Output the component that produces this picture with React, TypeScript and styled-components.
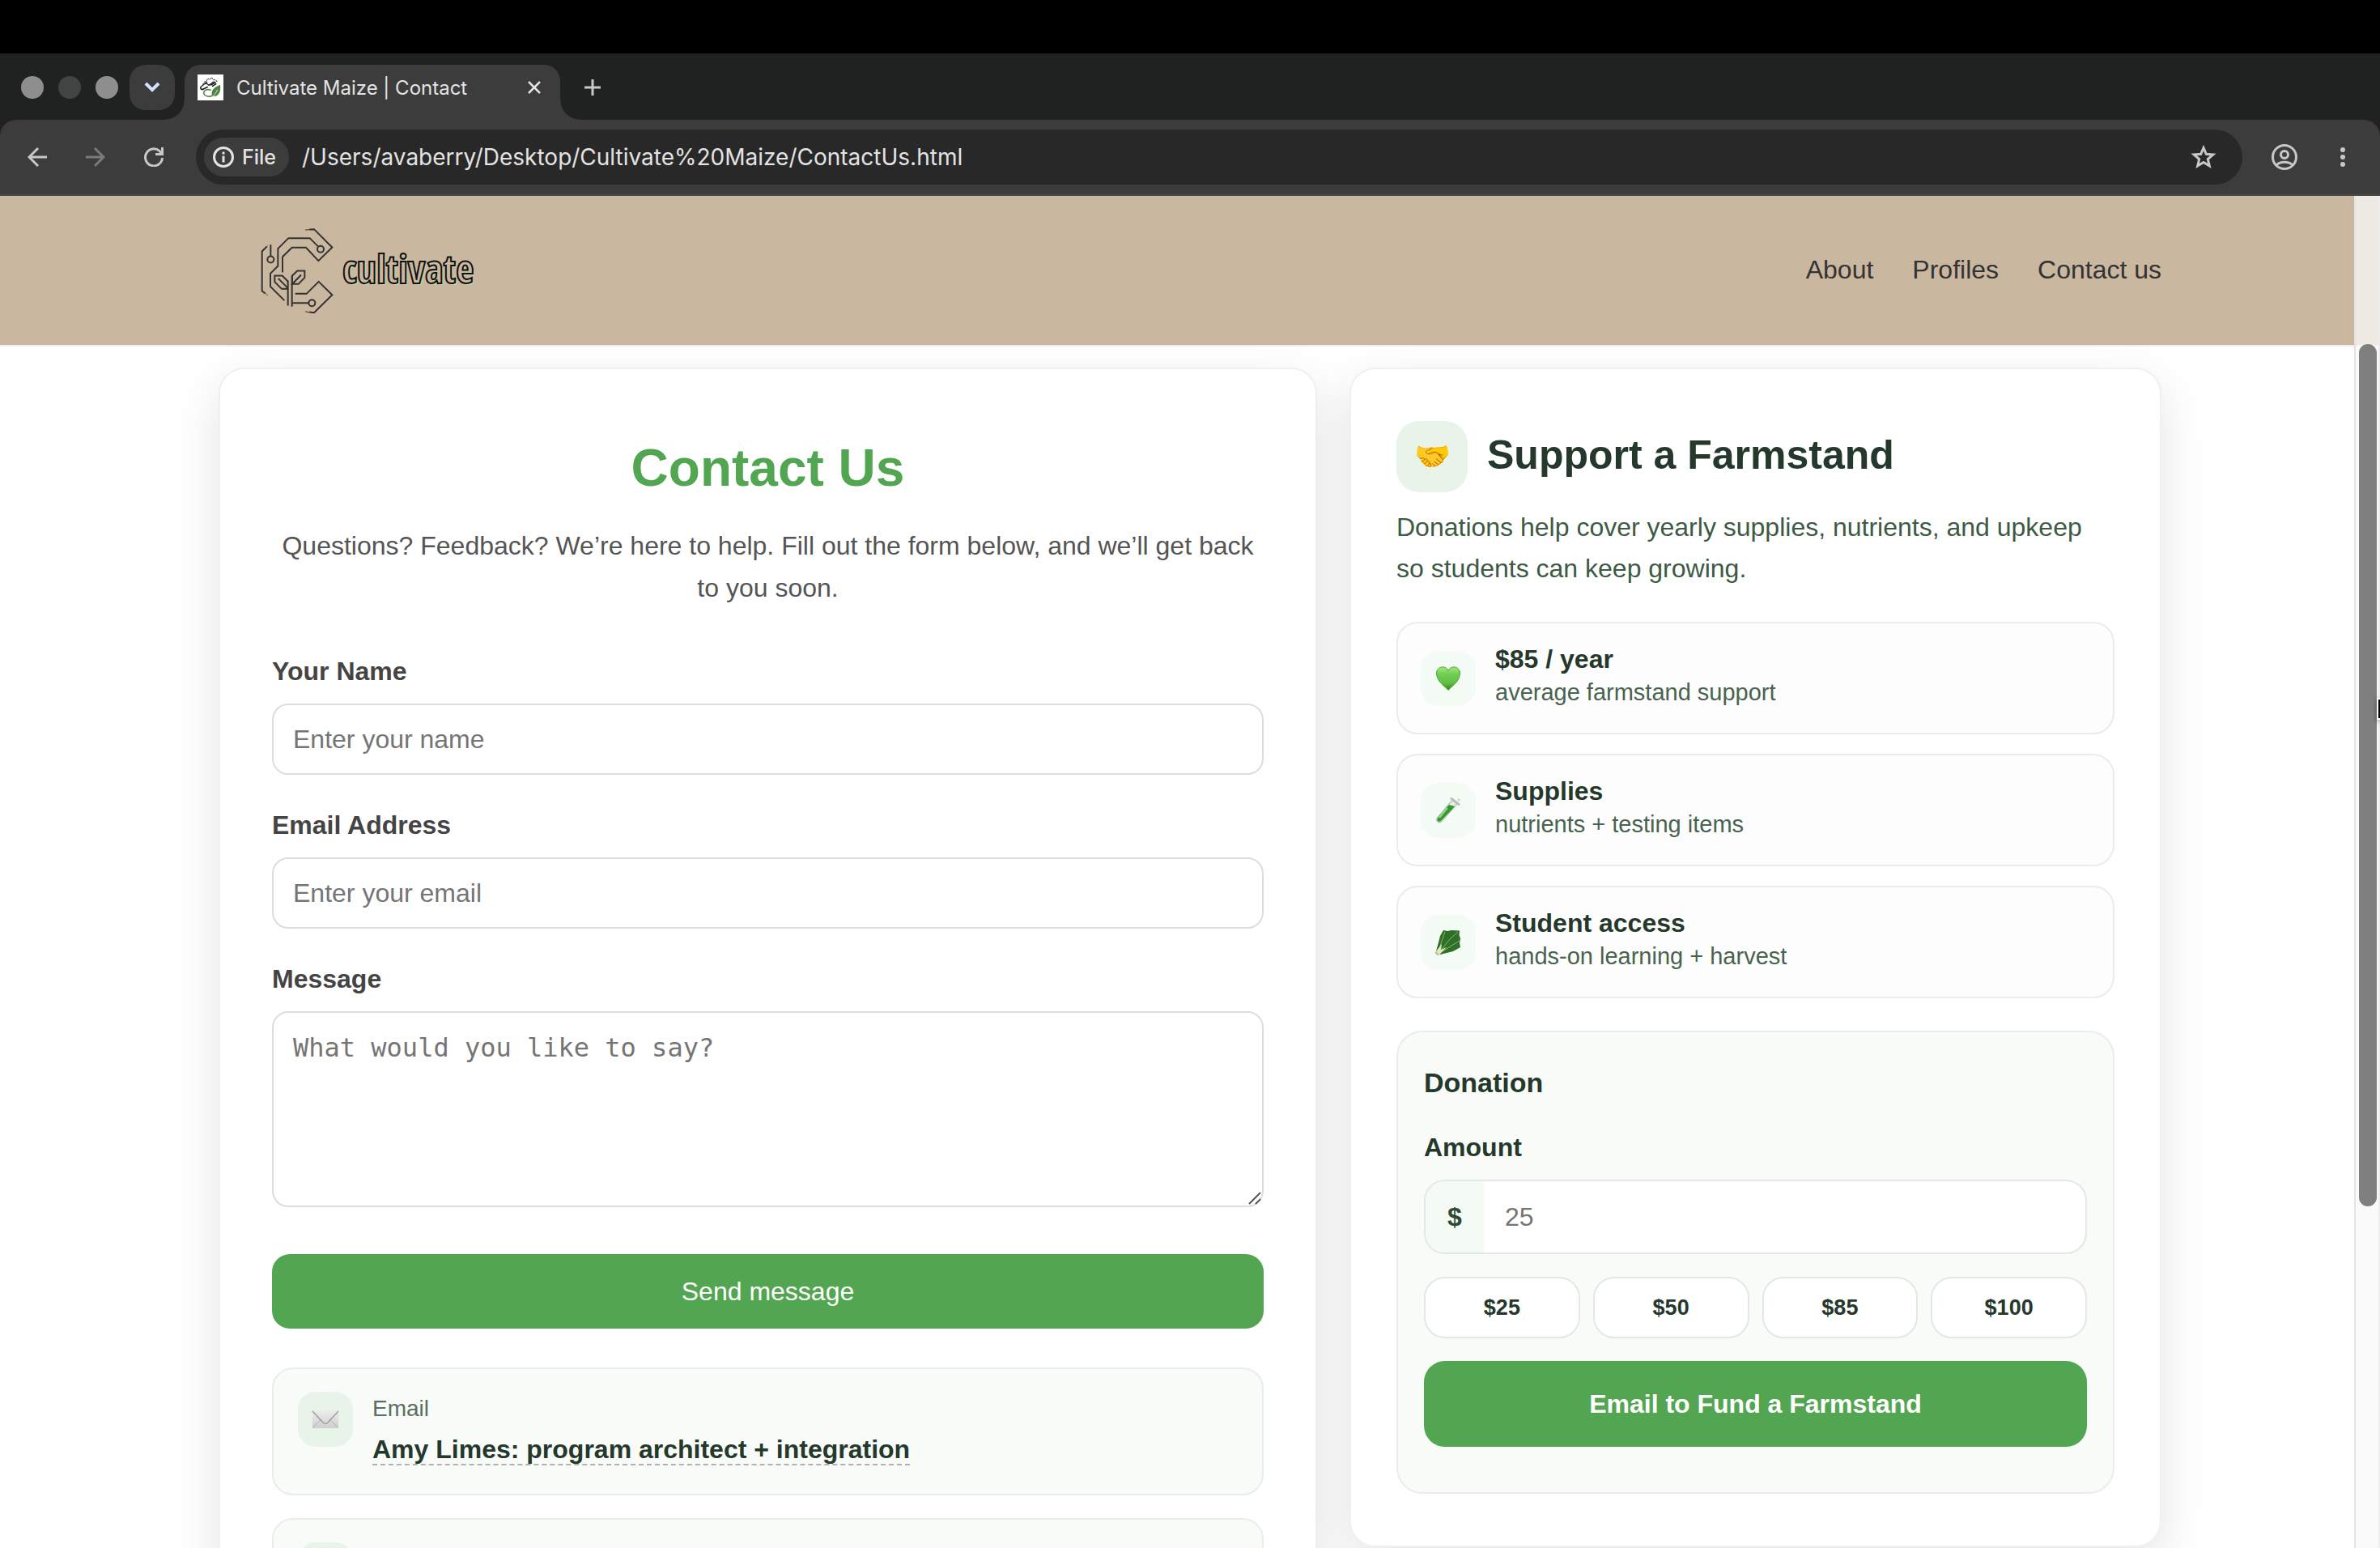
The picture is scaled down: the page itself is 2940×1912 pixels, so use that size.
import React, { useState } from "react";
import styled, { createGlobalStyle } from "styled-components";

const c = {
  green: "#53a651",
  ink: "#24382b",
  forest: "#3d5a45",
  tan: "#cab79f",
  bar: "#3c3c3c",
  strip: "#202221",
  chromeText: "#e3e3e3",
  chromeIcon: "#c7c7c7",
  pale: "#f8fbf8",
  paleLine: "#e6efe8",
  mint: "#e8f4ea",
};

const GlobalStyle = createGlobalStyle`
  *, *::before, *::after { box-sizing: border-box; }
  html, body, #root { height: 100%; margin: 0; }
  body {
    background: #fff;
    color: #333;
    font-family: "Liberation Sans", Arial, sans-serif;
    font-size: 32px;
  }
  button, input { font-family: inherit; }
  h1, h2, h3, p { margin: 0; }
  ul { list-style: none; margin: 0; padding: 0; }
`;

/* ---------- browser frame ---------- */

const Screen = styled.div`
  position: relative;
  display: flex;
  flex-direction: column;
  height: 100vh;
  overflow: hidden;
`;

const MenuBar = styled.div`
  flex: none;
  height: 66px;
  background: #000;
`;

const TabStrip = styled.div`
  flex: none;
  display: flex;
  align-items: flex-start;
  height: 82px;
  padding: 14px 26px 0;
  background: ${c.strip};
`;

const Lights = styled.div`
  display: flex;
  align-items: center;
  gap: 18px;
  height: 56px;
  margin-right: 14px;
`;

const Light = styled.span<{ $dim?: boolean }>`
  width: 28px;
  height: 28px;
  border-radius: 50%;
  background: ${(p) => (p.$dim ? "#424443" : "#8e8e8e")};
`;

const IconButton = styled.button`
  display: flex;
  align-items: center;
  justify-content: center;
  padding: 0;
  border: 0;
  background: none;
  color: ${c.chromeIcon};

  &:disabled {
    color: #7a7a7a;
  }
`;

const TabSearch = styled(IconButton)`
  width: 56px;
  height: 56px;
  margin-right: 12px;
  border-radius: 20px;
  background: ${c.bar};
  color: #d3e3fd;
`;

const Tab = styled.div`
  position: relative;
  display: flex;
  align-items: center;
  gap: 16px;
  width: 464px;
  height: 68px;
  padding: 0 24px 12px 16px;
  border-radius: 20px 20px 0 0;
  background: ${c.bar};
  color: ${c.chromeText};
  font-family: Inter, sans-serif;
  font-size: 24px;

  &::before,
  &::after {
    content: "";
    position: absolute;
    bottom: 0;
    width: 24px;
    height: 24px;
  }
  &::before {
    right: 100%;
    background: radial-gradient(circle at 0 0, transparent 23px, ${c.bar} 24px);
  }
  &::after {
    left: 100%;
    background: radial-gradient(circle at 100% 0, transparent 23px, ${c.bar} 24px);
  }
`;

const TabTitle = styled.span`
  flex: 1;
  white-space: nowrap;
`;

const NewTab = styled(IconButton)`
  width: 56px;
  height: 56px;
  margin-left: 12px;
`;

const ToolbarWell = styled.div`
  flex: none;
  background: ${c.strip};
`;

const Toolbar = styled.div`
  display: flex;
  align-items: center;
  height: 94px;
  padding: 0 42px 0 34px;
  border-bottom: 2px solid #4a4a4a;
  border-radius: 20px 20px 0 0;
  background: ${c.bar};
`;

const NavButtons = styled.div`
  display: flex;
  gap: 48px;
  margin-right: 40px;
`;

const Omnibox = styled.div`
  flex: 1;
  display: flex;
  align-items: center;
  gap: 16px;
  height: 68px;
  padding: 0 32px 0 10px;
  border-radius: 34px;
  background: #282828;
`;

const FileChip = styled.button`
  display: flex;
  align-items: center;
  gap: 10px;
  height: 48px;
  padding: 0 16px 0 11px;
  border: 0;
  border-radius: 24px;
  background: ${c.bar};
  color: ${c.chromeText};
  font-family: Inter, sans-serif;
  font-size: 25px;
  font-weight: 500;
`;

const Address = styled.input`
  flex: 1;
  min-width: 0;
  padding: 0;
  border: 0;
  outline: 0;
  background: none;
  color: ${c.chromeText};
  && {
    font-family: Inter, sans-serif;
  }
  font-size: 28px;
`;

const EndButtons = styled.div`
  display: flex;
  align-items: center;
  gap: 52px;
  margin-left: 36px;
`;

/* ---------- page ---------- */

const Viewport = styled.div`
  position: relative;
  flex: 1;
  min-height: 0;
  overflow: hidden;
  background: #fff;
`;

const Header = styled.header`
  background: ${c.tan};
  border-bottom: 2px solid #eee;
`;

const HeaderInner = styled.div`
  display: flex;
  align-items: center;
  justify-content: space-between;
  max-width: 2400px;
  height: 184px;
  margin: 0 auto;
`;

const Logo = styled.a`
  display: flex;
  align-items: center;
  gap: 11px;
  margin-left: 52px;
  text-decoration: none;
`;

const Wordmark = styled.span`
  padding-bottom: 4px;
  color: ${c.tan};
  font-family: "Open Sans Condensed", "Open Sans", sans-serif;
  font-size: 48px;
  font-weight: 700;
  line-height: 56px;
  -webkit-text-stroke: 2px #111;
  text-shadow: 2px 2px 0 #c3d9ab;
`;

const Nav = styled.nav`
  display: flex;
  gap: 48px;
  padding-bottom: 2px;
`;

const NavLink = styled.a`
  color: #333;
  line-height: 40px;
  text-decoration: none;
`;

const Main = styled.main`
  display: grid;
  grid-template-columns: 1.15fr 0.85fr;
  align-items: start;
  gap: 40px;
  max-width: 2400px;
  margin: 0 auto;
  padding: 26px 0 64px;
`;

const Card = styled.section<{ $inset: number }>`
  padding: 64px ${(p) => p.$inset}px;
  border: 2px solid #f0f0f0;
  border-radius: 32px;
  background: #fff;
  box-shadow: 0 20px 60px rgba(0, 0, 0, 0.11);
`;

const Title = styled.h1`
  margin-bottom: 12px;
  color: ${c.green};
  font-size: 64px;
  line-height: 116px;
  text-align: center;
`;

const Intro = styled.p`
  color: #555;
  line-height: 52px;
  text-align: center;
`;

const Form = styled.form`
  display: flex;
  flex-direction: column;
  gap: 36px;
  margin-top: 51px;
`;

const Field = styled.div`
  display: flex;
  flex-direction: column;
  gap: 14px;
`;

const Label = styled.label<{ $dark?: boolean }>`
  color: ${(p) => (p.$dark ? c.ink : "#444")};
  font-weight: 700;
  line-height: 52px;
`;

const TextInput = styled.input`
  width: 100%;
  height: 88px;
  padding: 0 24px;
  border: 2px solid #ddd;
  border-radius: 20px;
  background: #fff;
  font-size: 32px;

  &::placeholder {
    color: #757575;
  }
`;

const AreaWrap = styled.div`
  position: relative;
  display: flex;
`;

const TextArea = styled.textarea`
  width: 100%;
  height: 242px;
  padding: 24px;
  border: 2px solid #ddd;
  border-radius: 20px;
  background: #fff;
  font-family: "DejaVu Sans Mono", monospace;
  font-size: 32px;
  resize: none;

  &::placeholder {
    color: #757575;
  }
`;

const Grip = styled.svg`
  position: absolute;
  right: 3px;
  bottom: 3px;
  pointer-events: none;
`;

const SendButton = styled.button`
  height: 92px;
  margin-top: 22px;
  border: 0;
  border-radius: 22px;
  background: ${c.green};
  color: #fff;
  font-size: 32px;
`;

const Contacts = styled.ul`
  display: flex;
  flex-direction: column;
  gap: 28px;
  margin-top: 48px;
`;

const ContactRow = styled.li`
  display: flex;
  gap: 24px;
  min-height: 158px;
  padding: 28px 30px;
  border: 2px solid ${c.paleLine};
  border-radius: 26px;
  background: ${c.pale};
`;

const IconTile = styled.span<{ $large?: boolean; $faint?: boolean }>`
  flex: none;
  display: flex;
  align-items: center;
  justify-content: center;
  width: ${(p) => (p.$large ? 88 : 68)}px;
  height: ${(p) => (p.$large ? 88 : 68)}px;
  border-radius: ${(p) => (p.$large ? 28 : 22)}px;
  background: ${(p) => (p.$faint ? "#f4faf4" : c.mint)};
  font-size: 36px;
`;

const ContactKind = styled.div`
  margin-bottom: 2px;
  color: #5b6f61;
  font-size: 28px;
  line-height: 42px;
`;

const ContactName = styled.div`
  line-height: 54px;
`;

const ContactLink = styled.a`
  border-bottom: 2px dashed #a9b6ac;
  color: ${c.ink};
  font-weight: 700;
  text-decoration: none;
`;

const SupportHead = styled.div`
  display: flex;
  align-items: center;
  gap: 24px;
`;

const SupportTitle = styled.h2`
  padding-bottom: 4px;
  color: ${c.ink};
  font-size: 50px;
  line-height: 60px;
`;

const SupportText = styled.p`
  margin: 18px 0 40px;
  color: ${c.forest};
  line-height: 51px;
`;

const Stats = styled.ul`
  display: flex;
  flex-direction: column;
  gap: 24px;
  margin-bottom: 40px;
`;

const Stat = styled.li`
  display: flex;
  align-items: center;
  gap: 24px;
  padding: 24px 28px;
  border: 2px solid ${c.paleLine};
  border-radius: 26px;
  background: #fcfdfc;
`;

const StatText = styled.div`
  padding-bottom: 5px;
`;

const StatName = styled.div`
  color: ${c.ink};
  font-weight: 700;
  line-height: 40px;
`;

const StatNote = styled.div`
  color: #48634f;
  font-size: 29px;
  line-height: 42px;
`;

const Donation = styled.form`
  padding: 32px 32px 56px;
  border: 2px solid ${c.paleLine};
  border-radius: 32px;
  background: ${c.pale};
`;

const DonationTitle = styled.h3`
  margin-bottom: 24px;
  color: ${c.ink};
  font-size: 34px;
  line-height: 60px;
`;

const AmountBox = styled.div`
  display: flex;
  height: 92px;
  overflow: hidden;
  border: 2px solid #e0eae3;
  border-radius: 26px;
  background: #fff;
`;

const Dollar = styled.span`
  display: flex;
  align-items: center;
  justify-content: center;
  width: 72px;
  background: #f4faf4;
  color: #2f4a38;
  font-weight: 700;
`;

const AmountInput = styled.input`
  flex: 1;
  min-width: 0;
  padding: 0 26px;
  border: 0;
  outline: 0;
  background: none;
  font-size: 32px;

  &::placeholder {
    color: #757575;
  }
`;

const Chips = styled.div`
  display: grid;
  grid-template-columns: repeat(4, 1fr);
  gap: 16px;
  margin: 28px 0;
`;

const Chip = styled.button`
  height: 76px;
  padding: 0;
  border: 2px solid #e0eae3;
  border-radius: 26px;
  background: #fff;
  color: ${c.ink};
  font-size: 27px;
  font-weight: 700;
`;

const FundButton = styled.button`
  display: block;
  width: 100%;
  height: 106px;
  border: 0;
  border-radius: 26px;
  background: ${c.green};
  color: #fff;
  font-size: 32px;
  font-weight: 700;
`;

/* ---------- overlays ---------- */

const ScrollTrack = styled.div`
  position: absolute;
  top: 0;
  right: 0;
  bottom: 0;
  width: 32px;
  border: solid #e2e2e2;
  border-width: 0 2px;
  border-right-color: #ededed;
  background: rgba(249, 249, 249, 0.76);
`;

const ScrollThumb = styled.div`
  position: absolute;
  top: 183px;
  right: 2px;
  bottom: 422px;
  width: 22px;
  border-radius: 11px;
  background: #7f7f7f;
`;

const Pointer = styled.div`
  position: absolute;
  top: 864px;
  right: 0;
  width: 2px;
  height: 23px;
  background: #000;
  box-shadow: 0 0 0 2px #fff, 0 2px 6px 2px rgba(0, 0, 0, 0.4);
`;

/* ---------- drawings ---------- */

const Favicon = () => (
  <svg width="32" height="32" viewBox="0 0 96 96" fill="none">
    <rect width="96" height="96" fill="#fff" />
    <path d="M20 38l4-10 10-4 4-10 8 6 6-10 6 10 10 0 6 10" stroke="#222" strokeWidth="3" strokeDasharray="7 4" />
    <path d="M12 46l10-8 14-12M30 30l12 10 20-14" stroke="#222" strokeWidth="4" />
    <path d="M48 40l20-12M54 44l16-10" stroke="#111" strokeWidth="4" />
    <path d="M12 46c-2 8 4 12 10 8l16-8" stroke="#111" strokeWidth="5" />
    <path d="M50 58c-18-6-30 4-26 14 4 10 22 12 32 6" stroke="#5a8a4c" strokeWidth="5" />
    <path d="M84 38C66 46 48 54 54 80c22 4 34-14 30-42z" fill="#4f8243" />
    <path d="M52 84c8-4 16-14 22-28" stroke="#dcebd5" strokeWidth="3" />
  </svg>
);

const CultivateMark = () => (
  <svg width="90" height="107" viewBox="67 62 270 320" fill="none" stroke="#333" strokeWidth="6">
    <path d="M90 132L72 150V296L84 306" />
    <path d="M94 128l-8 8M82 304l12 10" strokeWidth="2" />
    <path d="M104 125V167" />
    <circle cx="104" cy="180" r="12" />
    <path d="M155 332L103 280V232L131 204V140L170 101H249L279 131" />
    <circle cx="289" cy="142" r="12" />
    <path d="M148 228V170L183 136H235L281 185L332 135L265 68L248 69" />
    <path d="M250 69l-18 2M250 376l-18-3" strokeWidth="3" />
    <path d="M195 307H237L282 262L332 311L265 377L248 375" />
    <path d="M168 351V258M183 355V240M183 341H244" />
    <circle cx="257" cy="341" r="12" />
    <path d="M184 271V240L203 222H230V247L207 271H184L217 237" />
    <path d="M168 289H145L119 263V240H147L168 261M132 250L168 286" />
  </svg>
);

const Heart = () => (
  <svg width="32" height="32" viewBox="0 0 32 32">
    <defs>
      <linearGradient id="heart" x1="0" y1="0" x2="0" y2="1">
        <stop offset="0" stopColor="#a3e684" />
        <stop offset="0.3" stopColor="#72cf52" />
        <stop offset="0.7" stopColor="#5fc040" />
        <stop offset="1" stopColor="#2f8420" />
      </linearGradient>
    </defs>
    <path
      d="M16 30.5C13 26.500 1.500 20 1.500 9.500C1.500 1 13 -1 16 6.500C19 -1 30.500 1 30.500 9.500C30.500 20 19 26.500 16 30.500Z"
      fill="url(#heart)"
      stroke="#4ea336"
    />
  </svg>
);

const TestTube = () => (
  <svg width="32" height="34" viewBox="0 0 32 34">
    <path d="M21 4L2.500 26C0 30 4 33.500 7.500 31L27 9Z" fill="#e3ebe4" stroke="#9aa89d" />
    <path d="M17 10L3 26.500C1.500 30 4 32 7 30L24 12Z" fill="#2f9a2c" />
    <path d="M15 14L5 26" stroke="#8fd785" strokeWidth="2" />
    <path d="M20 2.500L29 9.500" stroke="#b9bfba" strokeWidth="3" strokeLinecap="round" />
    <path d="M29 2v4M27 4h4" stroke="#a9e6a0" />
  </svg>
);

const Greens = () => (
  <svg width="32" height="32" viewBox="0 0 32 32">
    <path d="M10 1L15 2L20 1L30 1.500L29.500 7L31 11L30 17L31 22L22 27L6 31L1 27L4 16L6 8Z" fill="#2f7029" />
    <path d="M4 28L8 14L12 3M5 28L18 12L28 3M6 29L20 20L30 14" fill="none" stroke="#88b56b" />
    <path d="M1 27L8 18L7 25L14 22L5 31Z" fill="#dfe8bd" />
    <path d="M0 28l4 4" stroke="#c9b48c" strokeWidth="2" />
  </svg>
);

const Envelope = () => (
  <svg width="34" height="24" viewBox="0 0 34 24" fill="none">
    <defs>
      <linearGradient id="envelope" x1="0" y1="0" x2="0" y2="1">
        <stop offset="0" stopColor="#ededed" />
        <stop offset="1" stopColor="#cfcfcf" />
      </linearGradient>
    </defs>
    <rect x="1" y="1" width="32" height="22" rx="1" fill="url(#envelope)" />
    <path d="M1 22.500L12 12M33 22.500L22 12" stroke="#b2b2b2" />
    <path d="M1 2L14 16Q17 19 20 16L33 2" stroke="#9e9e9e" strokeWidth="1.500" />
  </svg>
);

const line = { fill: "none", stroke: "currentColor", strokeWidth: 3 };

const Frame = () => (
  <>
    <MenuBar />
    <TabStrip>
      <Lights>
        <Light />
        <Light $dim />
        <Light />
      </Lights>
      <TabSearch aria-label="Search tabs">
        <svg width="20" height="14" viewBox="0 0 20 14" {...line} strokeWidth="4">
          <path d="M2 2l8 8 8-8" />
        </svg>
      </TabSearch>
      <Tab>
        <Favicon />
        <TabTitle>Cultivate Maize | Contact</TabTitle>
        <IconButton aria-label="Close tab">
          <svg width="16" height="16" viewBox="0 0 16 16" {...line} stroke="#e3e3e3" strokeWidth="2.5">
            <path d="M1 1l14 14M15 1L1 15" />
          </svg>
        </IconButton>
      </Tab>
      <NewTab aria-label="New tab">
        <svg width="22" height="22" viewBox="0 0 22 22" {...line}>
          <path d="M11 1v20M1 11h20" />
        </svg>
      </NewTab>
    </TabStrip>
    <ToolbarWell>
      <Toolbar>
        <NavButtons>
          <IconButton aria-label="Back">
            <svg width="24" height="24" viewBox="0 0 24 24" {...line}>
              <path d="M24 12H2M13 1L2 12l11 11" />
            </svg>
          </IconButton>
          <IconButton aria-label="Forward" disabled>
            <svg width="24" height="24" viewBox="0 0 24 24" {...line}>
              <path d="M0 12h22M11 1l11 11-11 11" />
            </svg>
          </IconButton>
          <IconButton aria-label="Reload">
            <svg width="24" height="24" viewBox="0 0 24 24" {...line}>
              <path d="M22.500 13A10.500 10.500 0 1 1 19 4.500L22 8" />
              <path d="M22.500 0v8.500H14" />
            </svg>
          </IconButton>
        </NavButtons>
        <Omnibox>
          <FileChip>
            <svg width="26" height="26" viewBox="0 0 26 26" {...line}>
              <circle cx="13" cy="13" r="11.500" />
              <path d="M13 11.500v8M13 6.500v3" />
            </svg>
            File
          </FileChip>
          <Address
            aria-label="Address"
            defaultValue="/Users/avaberry/Desktop/Cultivate%20Maize/ContactUs.html"
          />
          <IconButton aria-label="Bookmark this page">
            <svg width="32" height="32" viewBox="0 0 32 32" {...line}>
              <path d="M16 4.500l3.300 7.800 8.500.700-6.500 5.500 2 8.300-7.300-4.400-7.300 4.400 2-8.300-6.500-5.500 8.500-.700z" />
            </svg>
          </IconButton>
        </Omnibox>
        <EndButtons>
          <IconButton aria-label="Profile">
            <svg width="32" height="32" viewBox="0 0 32 32" {...line}>
              <circle cx="16" cy="16" r="14.500" />
              <circle cx="16" cy="13" r="4.500" />
              <path d="M6 26c5-5 15-5 20 0" />
            </svg>
          </IconButton>
          <IconButton aria-label="Menu">
            <svg width="8" height="26" viewBox="0 0 8 26" fill="currentColor">
              <circle cx="4" cy="4" r="3" />
              <circle cx="4" cy="13" r="3" />
              <circle cx="4" cy="22" r="3" />
            </svg>
          </IconButton>
        </EndButtons>
      </Toolbar>
    </ToolbarWell>
  </>
);

const stats = [
  { name: "$85 / year", note: "average farmstand support", Icon: Heart },
  { name: "Supplies", note: "nutrients + testing items", Icon: TestTube },
  { name: "Student access", note: "hands-on learning + harvest", Icon: Greens },
];

const amounts = [25, 50, 85, 100];

const stay = (e: React.FormEvent) => e.preventDefault();

export default function App() {
  const [amount, setAmount] = useState("");

  return (
    <Screen>
      <GlobalStyle />
      <Frame />
      <Viewport>
        <Header>
          <HeaderInner>
            <Logo href="#home">
              <CultivateMark />
              <Wordmark>cultivate</Wordmark>
            </Logo>
            <Nav>
              <NavLink href="#about">About</NavLink>
              <NavLink href="#profiles">Profiles</NavLink>
              <NavLink href="#contact">Contact us</NavLink>
            </Nav>
          </HeaderInner>
        </Header>

        <Main>
          <Card $inset={64}>
            <Title>Contact Us</Title>
            <Intro>
              Questions? Feedback? We’re here to help. Fill out the form below, and we’ll get back to you soon.
            </Intro>
            <Form onSubmit={stay}>
              <Field>
                <Label htmlFor="name">Your Name</Label>
                <TextInput id="name" type="text" placeholder="Enter your name" />
              </Field>
              <Field>
                <Label htmlFor="email">Email Address</Label>
                <TextInput id="email" type="email" placeholder="Enter your email" />
              </Field>
              <Field>
                <Label htmlFor="message">Message</Label>
                <AreaWrap>
                  <TextArea id="message" placeholder="What would you like to say?" />
                  <Grip width="16" height="16" viewBox="0 0 16 16" stroke="#555" strokeWidth="2">
                    <path d="M1 15L15 1M9 15l6-6" />
                  </Grip>
                </AreaWrap>
              </Field>
              <SendButton type="submit">Send message</SendButton>
            </Form>
            <Contacts>
              <ContactRow>
                <IconTile>
                  <Envelope />
                </IconTile>
                <div>
                  <ContactKind>Email</ContactKind>
                  <ContactName>
                    <ContactLink href="#amy">Amy Limes: program architect + integration</ContactLink>
                  </ContactName>
                </div>
              </ContactRow>
              <ContactRow>
                <IconTile />
              </ContactRow>
            </Contacts>
          </Card>

          <Card $inset={56}>
            <SupportHead>
              <IconTile $large>🤝</IconTile>
              <SupportTitle>Support a Farmstand</SupportTitle>
            </SupportHead>
            <SupportText>
              Donations help cover yearly supplies, nutrients, and upkeep so students can keep growing.
            </SupportText>
            <Stats>
              {stats.map(({ name, note, Icon }) => (
                <Stat key={name}>
                  <IconTile $faint>
                    <Icon />
                  </IconTile>
                  <StatText>
                    <StatName>{name}</StatName>
                    <StatNote>{note}</StatNote>
                  </StatText>
                </Stat>
              ))}
            </Stats>
            <Donation onSubmit={stay}>
              <DonationTitle>Donation</DonationTitle>
              <Field>
                <Label $dark htmlFor="amount">
                  Amount
                </Label>
                <AmountBox>
                  <Dollar>$</Dollar>
                  <AmountInput
                    id="amount"
                    inputMode="numeric"
                    placeholder="25"
                    value={amount}
                    onChange={(e) => setAmount(e.target.value)}
                  />
                </AmountBox>
              </Field>
              <Chips>
                {amounts.map((n) => (
                  <Chip key={n} type="button" onClick={() => setAmount(String(n))}>
                    ${n}
                  </Chip>
                ))}
              </Chips>
              <FundButton type="submit">Email to Fund a Farmstand</FundButton>
            </Donation>
          </Card>
        </Main>

        <ScrollTrack>
          <ScrollThumb />
        </ScrollTrack>
      </Viewport>
      <Pointer />
    </Screen>
  );
}
